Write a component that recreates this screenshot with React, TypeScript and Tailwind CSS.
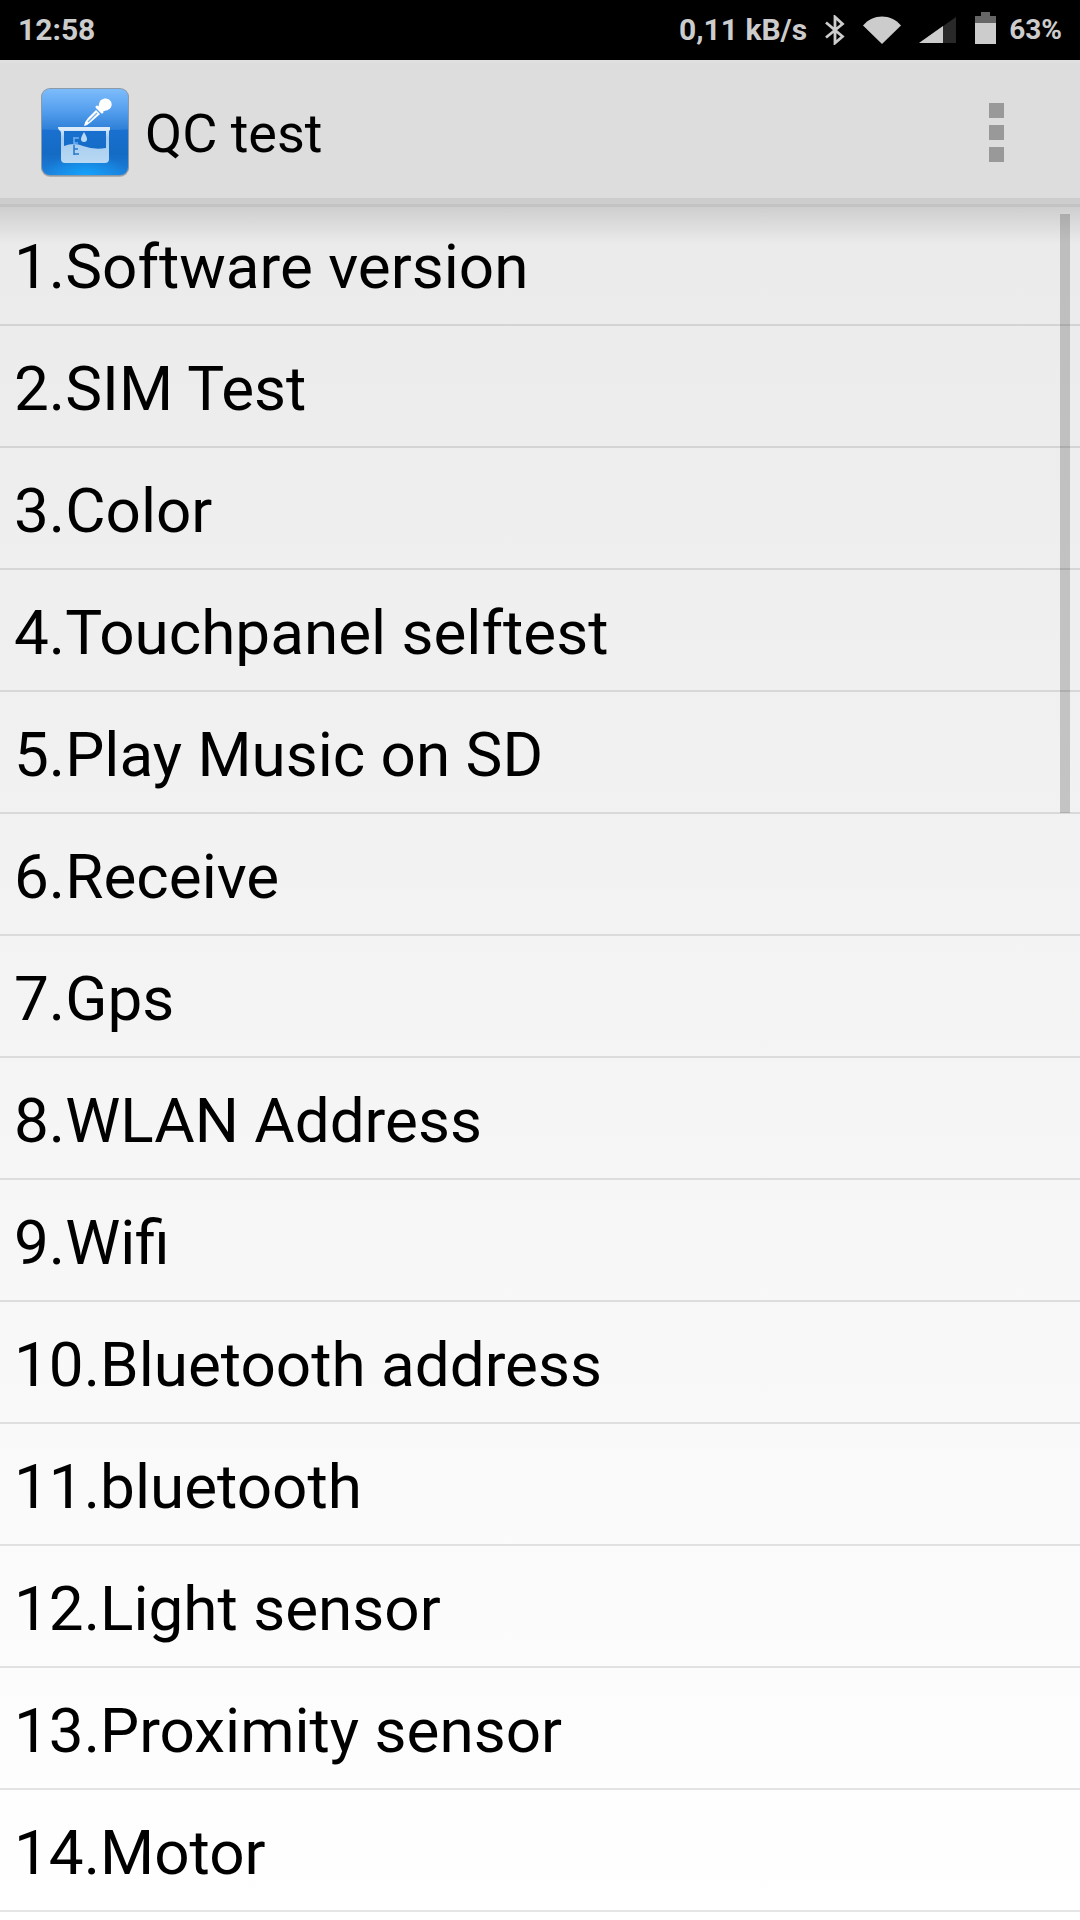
import { useState } from 'react';

const tests = [
  'Software version',
  'SIM Test',
  'Color',
  'Touchpanel selftest',
  'Play Music on SD',
  'Receive',
  'Gps',
  'WLAN Address',
  'Wifi',
  'Bluetooth address',
  'bluetooth',
  'Light sensor',
  'Proximity sensor',
  'Motor',
];

function StatusBar() {
  return (
    <div className="flex h-[60px] items-center justify-between bg-black px-[18px] pb-px text-[30px] font-bold text-[#cccccc]">
      <span>12:58</span>
      <div className="flex items-center">
        <span>0,11 kB/s</span>
        <svg className="ml-[18px] h-[30px] w-5" viewBox="0 0 20 30" fill="none" stroke="#cccccc" strokeWidth="2.8">
          <path d="M1 7.5 17.5 21.5 10 28V2l7.5 7L1 22.5" />
        </svg>
        <svg className="ml-[18px] h-[28px] w-[38px]" viewBox="0 0 38 28" fill="#cccccc">
          <path d="M0 9.5C10-2.5 28-2.5 38 9.5L19 28Z" />
        </svg>
        <svg className="ml-[18px] h-[26px] w-[37px]" viewBox="0 0 37 26">
          <path d="M0 26 37 0V26Z" fill="#292929" />
          <path d="M0 26 24 9V26Z" fill="#cccccc" />
        </svg>
        <svg className="mb-[3px] ml-[19px] h-8 w-[21px]" viewBox="0 0 21 32">
          <path d="M6 0H15V4H21V11H0V4H6Z" fill="#666666" />
          <path d="M0 11H21V32H0Z" fill="#cccccc" />
        </svg>
        <span className="ml-[13px] pt-px text-[28px]">63%</span>
      </div>
    </div>
  );
}

function AppIcon() {
  return (
    <svg className="h-24 w-24" viewBox="0 0 96 96">
      <defs>
        <linearGradient id="tile" x1="0" y1="0" x2="0" y2="1">
          <stop offset="0" stopColor="#7dbcfb" />
          <stop offset="0.25" stopColor="#559fee" />
          <stop offset="0.47" stopColor="#2e80d8" />
          <stop offset="0.48" stopColor="#1a70cf" />
          <stop offset="0.75" stopColor="#146bc4" />
          <stop offset="1" stopColor="#1c80dc" />
        </linearGradient>
        <radialGradient id="glow" cx="0.5" cy="1" r="0.5" gradientTransform="matrix(1 0 0 0.5 0 0.5)">
          <stop offset="0" stopColor="#14a2fb" />
          <stop offset="1" stopColor="#14a2fb" stopOpacity="0" />
        </radialGradient>
        <linearGradient id="glass" x1="0" y1="0" x2="0" y2="1">
          <stop offset="0" stopColor="#e4effb" />
          <stop offset="0.3" stopColor="#a5cbf0" />
          <stop offset="1" stopColor="#b9d9f3" />
        </linearGradient>
      </defs>
      <rect x="4" y="5" width="88" height="88" rx="9" fill="#000" opacity="0.2" />
      <rect x="4" y="4" width="88" height="88" rx="9" fill="#8c9aa8" />
      <rect x="5" y="5" width="86" height="86" rx="8" fill="url(#tile)" />
      <rect x="5" y="5" width="86" height="86" rx="8" fill="url(#glow)" />
      <path d="M5 45Q48 51 91 45V49H5Z" fill="#1a70cf" opacity="0.5" />
      {/* beaker */}
      <path
        fill="url(#glass)"
        fillRule="evenodd"
        d="M21 43H73V46L72 47V75Q72 79 68 79H28Q24 79 24 75V49Q24 47 22 46ZM27 47V62Q37 58 46 62Q57 66 69 64V47Z"
      />
      <path d="M21 43H73V46H22Z" fill="#dcebfa" />
      <path d="M37 53V61M37 54H42M37 59H41" stroke="#6fb0ee" strokeWidth="1.5" fill="none" />
      <path d="M37 61V71M37 65H41M37 70H42" stroke="#2478cc" strokeWidth="1.5" fill="none" />
      <path d="M47 48Q50 53 50 55A3 3 0 0 1 44 55Q44 53 47 48Z" fill="#b9daf7" />
      {/* dropper */}
      <path d="M47 42Q48 37 51 34L59 26L63 30L54 38Q51 41 47 42Z" fill="#fff" />
      <path d="M51 38L60 29" stroke="#72b0ee" strokeWidth="1.2" />
      <path d="M60 23L65 28" stroke="#fff" strokeWidth="3" strokeLinecap="round" />
      <path d="M60 24C63 22 61 19 64 16C69 12 76 16 74.500 22C73 27 68 26 65 28Z" fill="#fff" />
    </svg>
  );
}

function ActionBar({ onMenu }: { onMenu: () => void }) {
  return (
    <header className="relative h-36 border-b-6 border-[#cdcdcd] bg-[#dddddd]">
      <div className="flex h-36 items-center border-t-3 border-[#e0e0e0] pr-[54px] pb-[3px] pl-[37px]">
        <AppIcon />
        <h1 className="ml-3 grow pt-1 text-[54px] leading-none">QC test</h1>
        <button type="button" aria-label="More options" onClick={onMenu} className="flex w-[60px] flex-col items-center gap-[7px]">
          <span className="size-[15px] bg-[#999999]" />
          <span className="size-[15px] bg-[#999999]" />
          <span className="size-[15px] bg-[#999999]" />
        </button>
      </div>
      {/* shadow falling on the list */}
      <div className="absolute inset-x-0 top-36 h-10 border-t-3 border-[#c3c3c3] bg-linear-to-b from-black/12 to-transparent" />
    </header>
  );
}

export default function App() {
  const [selected, setSelected] = useState<number | null>(null);

  return (
    <div className="flex h-screen flex-col overflow-hidden bg-linear-to-b from-[#e8e8e8] to-white font-['Roboto',sans-serif] text-black">
      <StatusBar />
      <ActionBar onMenu={() => setSelected(null)} />
      <main className="relative min-h-0 grow overflow-hidden">
        <ul>
          {tests.map((name, i) => (
            <li key={name} className="border-b-2 border-black/10">
              <button
                type="button"
                aria-pressed={selected === i}
                onClick={() => setSelected(i)}
                className="block h-[120px] w-full pt-1.5 pl-3.5 text-left text-[62px] leading-none"
              >
                {i + 1}.{name}
              </button>
            </li>
          ))}
        </ul>
        {/* scroll thumb */}
        <div className="absolute top-[10px] right-[10px] h-[599px] w-[10px] bg-black/19" />
      </main>
    </div>
  );
}
